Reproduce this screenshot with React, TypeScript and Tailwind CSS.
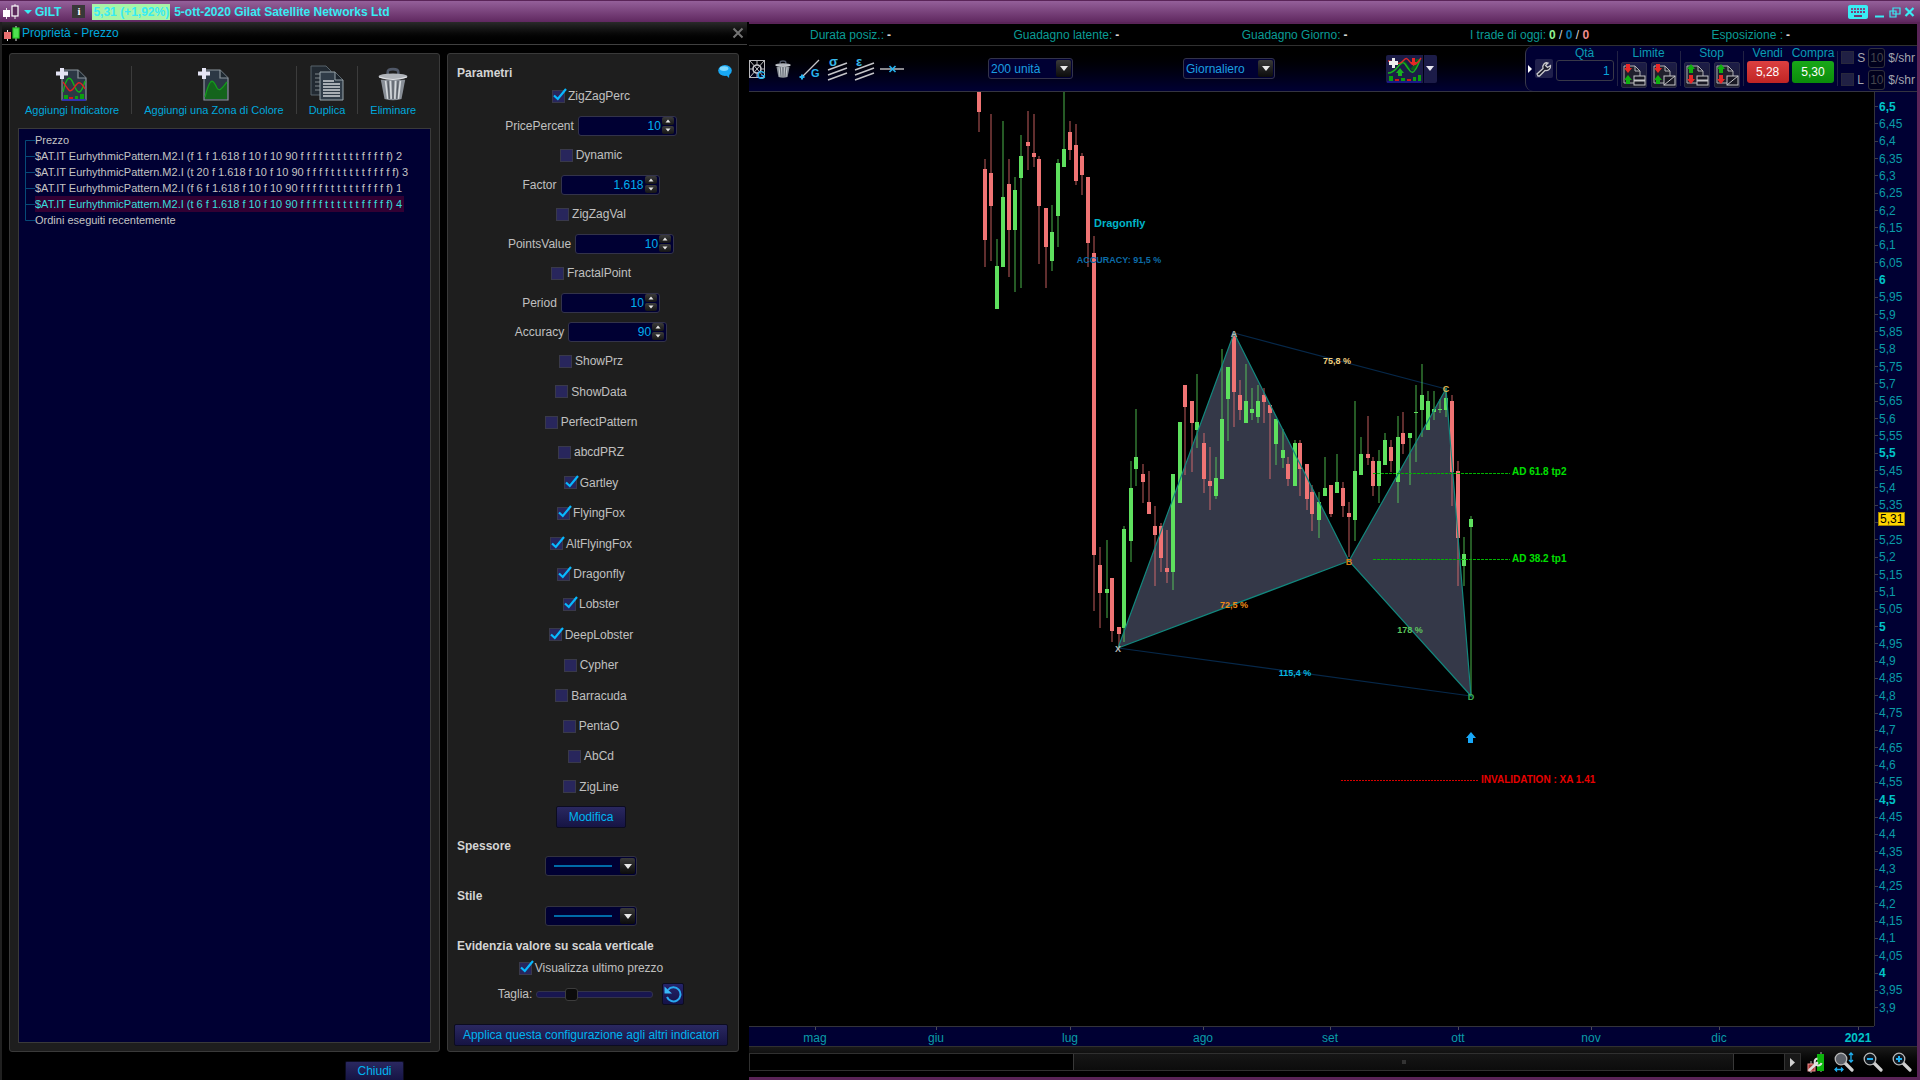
import type { ReactNode } from 'react';
import { MdKeyboard } from 'react-icons/md';

type Candle = [x: number, high: number, low: number, top: number, bottom: number, up: 0 | 1];

const candles: Candle[] = [
  [979, 92, 132, 90, 112, 0],
  [985, 159, 267, 169, 240, 0],
  [991, 114, 261, 173, 206, 0],
  [997, 239, 309, 266, 309, 1],
  [1003, 121, 267, 197, 267, 1],
  [1009, 159, 277, 184, 230, 0],
  [1015, 177, 292, 190, 230, 1],
  [1021, 135, 288, 156, 178, 1],
  [1028, 111, 170, 142, 146, 0],
  [1034, 114, 167, 153, 157, 0],
  [1039, 156, 264, 159, 206, 0],
  [1046, 208, 288, 208, 247, 0],
  [1052, 205, 271, 232, 261, 1],
  [1058, 159, 247, 163, 216, 1],
  [1064, 90, 167, 149, 167, 1],
  [1070, 121, 160, 132, 150, 0],
  [1076, 124, 185, 145, 181, 0],
  [1082, 153, 195, 156, 175, 0],
  [1088, 177, 267, 177, 243, 0],
  [1094, 236, 611, 253, 555, 0],
  [1100, 547, 628, 565, 593, 0],
  [1107, 540, 618, 589, 593, 1],
  [1112, 578, 642, 578, 631, 0],
  [1119, 627, 647, 627, 634, 0],
  [1124, 526, 642, 529, 628, 1],
  [1131, 461, 562, 488, 541, 1],
  [1136, 409, 486, 457, 469, 1],
  [1143, 464, 503, 474, 482, 0],
  [1149, 471, 514, 502, 514, 0],
  [1155, 506, 586, 526, 535, 0],
  [1161, 523, 572, 526, 558, 0],
  [1167, 530, 583, 568, 572, 0],
  [1173, 474, 590, 474, 572, 1],
  [1180, 422, 503, 422, 503, 1],
  [1185, 385, 475, 385, 407, 0],
  [1192, 401, 472, 401, 423, 0],
  [1197, 374, 448, 422, 430, 1],
  [1204, 433, 493, 443, 479, 0],
  [1210, 447, 510, 481, 486, 0],
  [1216, 457, 499, 478, 496, 1],
  [1222, 349, 479, 419, 479, 1],
  [1228, 367, 441, 367, 399, 1],
  [1234, 333, 427, 336, 392, 0],
  [1240, 380, 420, 395, 410, 0],
  [1246, 364, 423, 401, 423, 1],
  [1252, 388, 420, 409, 413, 1],
  [1258, 385, 423, 401, 417, 1],
  [1264, 388, 423, 395, 402, 0],
  [1270, 405, 479, 405, 413, 0],
  [1276, 419, 465, 419, 444, 1],
  [1283, 429, 468, 450, 458, 1],
  [1288, 457, 486, 464, 479, 0],
  [1295, 440, 486, 443, 486, 1],
  [1300, 440, 496, 443, 469, 0],
  [1307, 464, 510, 464, 499, 0],
  [1312, 485, 531, 492, 514, 0],
  [1319, 492, 538, 502, 520, 1],
  [1325, 457, 496, 488, 496, 1],
  [1331, 485, 517, 485, 514, 0],
  [1337, 454, 493, 482, 493, 1],
  [1343, 482, 517, 488, 506, 0],
  [1349, 502, 557, 513, 517, 0],
  [1355, 401, 541, 471, 520, 1],
  [1361, 437, 475, 454, 475, 1],
  [1368, 416, 465, 454, 458, 0],
  [1373, 457, 496, 461, 486, 0],
  [1379, 450, 503, 461, 486, 1],
  [1385, 433, 465, 440, 465, 1],
  [1391, 440, 472, 447, 461, 0],
  [1398, 416, 503, 437, 482, 1],
  [1403, 412, 454, 433, 444, 0],
  [1410, 433, 485, 433, 438, 1],
  [1416, 385, 462, 412, 413, 1],
  [1422, 364, 437, 395, 410, 1],
  [1428, 391, 430, 401, 430, 1],
  [1434, 391, 420, 409, 412, 1],
  [1440, 399, 413, 409, 410, 1],
  [1446, 388, 417, 398, 410, 1],
  [1452, 395, 506, 401, 472, 0],
  [1458, 461, 586, 471, 538, 0],
  [1464, 537, 586, 554, 566, 1],
  [1471, 516, 695, 519, 527, 1],
];

const months: [string, number][] = [
  ['mag', 815],
  ['giu', 936],
  ['lug', 1070],
  ['ago', 1203],
  ['set', 1330],
  ['ott', 1458],
  ['nov', 1591],
  ['dic', 1719],
  ['2021', 1858],
];

const prices = Array.from({ length: 53 }, (_, i) => 650 - i * 5);

const treeRows = [
  'Prezzo',
  '$AT.IT EurhythmicPattern.M2.I (f 1 f 1.618 f 10 f 10 90 f f f f t t t t t t f f f f f) 2',
  '$AT.IT EurhythmicPattern.M2.I (t 20 f 1.618 f 10 f 10 90 f f f f t t t t t t f f f f f) 3',
  '$AT.IT EurhythmicPattern.M2.I (f 6 f 1.618 f 10 f 10 90 f f f f t t t t t t f f f f f) 1',
  '$AT.IT EurhythmicPattern.M2.I (t 6 f 1.618 f 10 f 10 90 f f f f t t t t t t f f f f f) 4',
  'Ordini eseguiti recentemente',
];

const flags: [string, boolean][] = [
  ['ShowPrz', false],
  ['ShowData', false],
  ['PerfectPattern', false],
  ['abcdPRZ', false],
  ['Gartley', true],
  ['FlyingFox', true],
  ['AltFlyingFox', true],
  ['Dragonfly', true],
  ['Lobster', true],
  ['DeepLobster', true],
  ['Cypher', false],
  ['Barracuda', false],
  ['PentaO', false],
  ['AbCd', false],
  ['ZigLine', false],
];

/* ---------- form pieces ---------- */

const CheckField = ({ label, checked = false }: { label: string; checked?: boolean }) => (
  <label className="relative flex items-center gap-[3px]">
    <input
      type="checkbox"
      defaultChecked={checked}
      className="peer size-[13px] shrink-0 appearance-none border border-[#39394a] bg-[#28265c]"
    />
    <svg viewBox="0 0 14 14" className="pointer-events-none absolute left-px top-0 hidden size-[14px] peer-checked:block">
      <path d="M1 7.5 L4.8 11 L13 1" fill="none" stroke="#08b8ff" strokeWidth="2.2" />
    </svg>
    {label}
  </label>
);

const CheckRow = ({ label, checked }: { label: string; checked?: boolean }) => (
  <div className="flex h-[30px] items-center justify-center">
    <CheckField label={label} checked={checked} />
  </div>
);

const StepButton = ({ label, up }: { label: string; up?: boolean }) => (
  <button
    type="button"
    aria-label={label}
    className="flex h-2 w-3 items-center justify-center rounded-[2px] bg-gradient-to-b from-[#3c3c3c] to-[#161616]"
  >
    <svg viewBox="0 0 6 4" className="h-1 w-[6px]">
      <path d={up ? 'M3 0.5 L5.5 3.5 H0.5 Z' : 'M3 3.5 L5.5 0.5 H0.5 Z'} fill="#e6e6e6" />
    </svg>
  </button>
);

const NumberRow = ({ label, value }: { label: string; value: string }) => (
  <div className="flex h-[29px] items-center justify-center gap-1">
    <label htmlFor={label}>{label}</label>
    <span className="flex h-5 w-[99px] items-center rounded-[3px] border border-[#33334a] bg-[#000033] pr-[2px]">
      <input id={label} defaultValue={value} className="w-full min-w-0 bg-transparent pr-px text-right text-[#00aeef] outline-none" />
      <span className="flex flex-col gap-px">
        <StepButton up label={label + ' +'} />
        <StepButton label={label + ' -'} />
      </span>
    </span>
  </div>
);

const Arrow = () => (
  <span className="pointer-events-none absolute inset-y-[2px] right-[2px] flex w-[15px] items-center justify-center rounded-[2px] bg-gradient-to-b from-[#3a3a3a] to-[#0c0c0c]">
    <svg viewBox="0 0 8 5" className="h-[5px] w-2">
      <path d="M0 0 H8 L4 5 Z" fill="#e8e8e8" />
    </svg>
  </span>
);

const LinePicker = ({ label }: { label: string }) => (
  <div className="relative mx-auto h-5 w-[92px]">
    <select aria-label={label} className="size-full appearance-none rounded-[3px] border border-[#33333f] bg-[#000033]">
      <option value="1" aria-label="1"></option>
    </select>
    <svg viewBox="0 0 58 2" className="pointer-events-none absolute left-[9px] top-[9px] h-[2px] w-[58px]">
      <path d="M0 1 H58" stroke="#0090d0" strokeWidth="1.4" />
    </svg>
    <Arrow />
  </div>
);

const ToolSelect = ({ value, className }: { value: string; className: string }) => (
  <div className={'relative h-[21px] ' + className}>
    <select
      aria-label={value}
      className="size-full appearance-none rounded-[3px] border border-[#33334a] bg-[#000033] pl-[2px] text-[12px] text-[#1a9fe0]"
    >
      <option>{value}</option>
    </select>
    <Arrow />
  </div>
);

/* ---------- drawings ---------- */

const Page = ({ children }: { children: ReactNode }) => (
  <svg viewBox="0 0 32 34" className="h-[34px] w-8">
    <path d="M6 3 H22 L30 11 V33 H6 Z" fill="#2c3845" stroke="#8a949c" strokeWidth="1.2" />
    <path d="M22 3 V11 H30" fill="#1e2830" stroke="#8a949c" strokeWidth="1.2" />
    {children}
    <path d="M4 1 H8 V4.5 H12 V8.5 H8 V12 H4 V8.5 H0 V4.5 H4 Z" fill="#e4e4f4" />
  </svg>
);

const IndicatorIcon = () => (
  <Page>
    <path d="M7 25 C11 8 14 8 18 18 S25 28 29 14" fill="none" stroke="#10b418" strokeWidth="1.4" />
    <path d="M7 15 C11 20 13 27 17 22 S23 11 29 22" fill="none" stroke="#e02020" strokeWidth="1.4" />
    <path d="M8 28 h4 v4 h-4z M19 29 h3 v3 h-3z M24 27 h4 v5 h-4z" fill="#0ca010" />
    <path d="M13 30 h4 v2 h-4z" fill="#d01818" />
    <path d="M6 33 H30" stroke="#2020d0" strokeWidth="1.4" />
  </Page>
);

const ZoneIcon = () => (
  <Page>
    <path d="M7 30 C11 14 14 10 18 19 C21 27 25 20 29 15 V32 H7 Z" fill="#14641c" />
    <path d="M7 30 C11 14 14 10 18 19 C21 27 25 20 29 15" fill="none" stroke="#149c1c" strokeWidth="1.3" />
  </Page>
);

const DuplicateIcon = () => (
  <svg viewBox="0 0 34 36" className="h-9 w-[34px]">
    <path d="M1 1 H16 L21 6 V30 H1 Z" fill="#222a32" stroke="#56626a" />
    <path d="M5 9 H10 M5 13 H10 M5 17 H10 M5 21 H10 M5 25 H10" stroke="#80888c" />
    <path d="M10 7 H25 L33 15 V35 H10 Z" fill="#303c48" stroke="#98a4aa" />
    <path d="M25 7 V15 H33" fill="#1c242c" stroke="#98a4aa" />
    <path d="M13 16 H24 M13 19 H30 M13 22 H30 M13 25 H30 M13 28 H30 M13 31 H30" stroke="#d0d4d8" strokeWidth="1.3" />
  </svg>
);

const TrashIcon = ({ className }: { className: string }) => (
  <svg viewBox="0 0 28 32" className={className}>
    <path d="M9 8 V5 Q9 2 14 2 Q19 2 19 5 V8" fill="none" stroke="#505868" strokeWidth="2.4" />
    <ellipse cx="14" cy="9" rx="13.5" ry="3" fill="#b0b4ba" />
    <path d="M2.5 12 H25.5 L22 30 Q14 32.5 6 30 Z" fill="#888e96" />
    <path d="M7 13 L9 30 M11.5 13 L12.3 30 M16.5 13 L15.7 30 M21 13 L19 30" stroke="#d4d8dc" strokeWidth="1.5" />
    <path d="M9.3 13 L10.6 30 M14 13 V30 M18.8 13 L17.5 30" stroke="#555b63" strokeWidth="1.1" />
    <path d="M1 9.5 Q14 14 27 9.5" stroke="#e0e2e6" fill="none" />
  </svg>
);

const CandlePair = ({ left, right }: { left: string; right: string }) => (
  <svg viewBox="0 0 17 17" className="h-[17px] w-[17px] shrink-0">
    <path d="M4.5 5 V16 M13 1 V16" stroke="#e8e8e8" />
    <rect x="1" y="7" width="7" height="7" fill={left} />
    <rect x="10" y="3" width="6" height="10" fill={right} stroke={right === '#5c2a5c' ? '#fff' : '#28c828'} strokeWidth="1.2" />
  </svg>
);

// Parallel trend lines with the greek letter of the tool above them
const ChannelIcon = ({ letter }: { letter: string }) => (
  <svg viewBox="0 0 21 24" className="h-6 w-[21px]">
    <path d="M1 13 L20 6 M1 18 L20 11 M1 23 L20 16" stroke="#c4c4c8" strokeWidth="1.5" />
    <text x="2" y="9" fontSize="13" fontWeight="700" fill="#38b8e8">
      {letter}
    </text>
  </svg>
);

const OrderIcon = ({ first, second, slash }: { first: string; second: string; slash?: boolean }) => (
  <button type="button" aria-label="Ordine" className="size-[26px] rounded-[2px] border border-[#2c2c48] bg-gradient-to-b from-[#1c1c48] to-[#1c1c2c]">
    <svg viewBox="0 0 24 24" className="size-6">
      <path d="M2 3 H13 L18 8 V20 H2 Z" fill="#20202c" stroke="#b0b0b4" />
      <path d="M13 3 V8 H18" fill="none" stroke="#b0b0b4" />
      <path d={first === '#e82828' ? 'M4 1 H8 V5 H10 L6 10 L2 5 H4 Z' : 'M6 1 L10 6 H8 V10 H4 V6 H2 Z'} fill={first} />
      <path d={second === '#e82828' ? 'M4 12 H8 V16 H10 L6 21 L2 16 H4 Z' : 'M6 12 L10 17 H8 V21 H4 V17 H2 Z'} fill={second} />
      <rect x="12" y="13" width="11" height="9" fill="#181824" stroke="#c4c4c8" />
      {slash ? <path d="M12 22 L23 13" stroke="#c4c4c8" /> : <path d="M12 17.5 H23" stroke="#c4c4c8" strokeWidth="2" />}
    </svg>
  </button>
);

const Magnifier = ({ children, lens = '#101820' }: { children?: ReactNode; lens?: string }) => (
  <svg viewBox="0 0 20 20" className="size-5">
    <path d="M11 11 L18 18" stroke="#d0d0d0" strokeWidth="3.2" strokeLinecap="round" />
    <circle cx="7" cy="7" r="5.8" fill={lens} stroke="#b8b8b8" strokeWidth="1.3" />
    {children}
  </svg>
);

/* ---------- properties dialog ---------- */

const ToolButton = ({ label, icon }: { label: string; icon: ReactNode }) => (
  <button type="button" className="flex flex-col items-center justify-end gap-px text-[11px] leading-4 text-[#00a8dc]">
    {icon}
    {label}
  </button>
);

const Divider = () => <span className="my-1 w-px bg-[#3c3c3c]" />;

const IndicatorsPanel = () => (
  <section className="flex w-[431px] flex-col rounded-[3px] border border-[#3a3a3a] bg-[#1e1e1e] p-2">
    <div className="flex h-14 gap-3 pl-[7px]">
      <ToolButton label="Aggiungi Indicatore" icon={<IndicatorIcon />} />
      <Divider />
      <ToolButton label="Aggiungi una Zona di Colore" icon={<ZoneIcon />} />
      <Divider />
      <ToolButton label="Duplica" icon={<DuplicateIcon />} />
      <Divider />
      <ToolButton label="Eliminare" icon={<TrashIcon className="h-[34px] w-[30px]" />} />
    </div>
    <ul className="mt-[10px] flex-1 overflow-hidden border border-[#3a3a3a] bg-[#000033] pl-[6px] pt-[3px] text-[11px] text-[#c4c4c4]">
      {treeRows.map((row, i) => (
        <li key={row} className="flex h-4 whitespace-nowrap leading-4">
          <svg viewBox="0 0 10 16" className="h-4 w-[10px] shrink-0">
            <path
              d={i === 0 ? 'M0.5 16 V8.5 H10' : i === treeRows.length - 1 ? 'M0.5 0 V8.5 H10' : 'M0.5 0 V16 M0.5 8.5 H10'}
              fill="none"
              stroke="#064a78"
            />
          </svg>
          <span className={i === 4 ? 'bg-[#330033] pr-[2px] text-[#38dcdc]' : ''}>{row}</span>
        </li>
      ))}
    </ul>
  </section>
);

const ParametersPanel = () => (
  <section className="flex w-[292px] flex-col rounded-[3px] border border-[#3a3a3a] bg-[#1e1e1e] pb-[5px] pl-[6px] pr-[10px] pt-[7px] text-[#c0c0c0]">
    <div className="flex h-5 items-end justify-between pl-[3px]">
      <h2 className="font-bold text-[#d4d4d4]">Parametri</h2>
      <button type="button" aria-label="Commento" className="-mr-1 self-center">
        <svg viewBox="0 0 14 13" className="h-[13px] w-[14px]">
          <ellipse cx="7" cy="5.5" rx="6.8" ry="5.4" fill="#18a8f4" />
          <path d="M7 9 L11 13 L11.5 8 Z" fill="#18a8f4" />
          <ellipse cx="6" cy="3.6" rx="4.4" ry="2.4" fill="#7cd8ff" />
        </svg>
      </button>
    </div>
    <CheckRow label="ZigZagPerc" checked />
    <NumberRow label="PricePercent" value="10" />
    <CheckRow label="Dynamic" />
    <NumberRow label="Factor" value="1.618" />
    <CheckRow label="ZigZagVal" />
    <NumberRow label="PointsValue" value="10" />
    <CheckRow label="FractalPoint" />
    <NumberRow label="Period" value="10" />
    <NumberRow label="Accuracy" value="90" />
    <div className="flex flex-1 flex-col">
      {flags.map(([label, checked]) => (
        <div key={label} className="flex flex-1 items-center justify-center">
          <CheckField label={label} checked={checked} />
        </div>
      ))}
    </div>
    <button
      type="button"
      className="mx-auto mt-1 h-[22px] w-[70px] rounded-[2px] border border-[#0c0c20] bg-gradient-to-b from-[#2a2860] to-[#161444] text-[#00b4f0]"
    >
      Modifica
    </button>
    <h2 className="mt-2 h-5 pl-[3px] font-bold leading-5 text-[#d4d4d4]">Spessore</h2>
    <LinePicker label="Spessore" />
    <h2 className="mt-[10px] h-5 pl-[3px] font-bold leading-5 text-[#d4d4d4]">Stile</h2>
    <LinePicker label="Stile" />
    <h2 className="mt-[10px] h-5 pl-[3px] font-bold leading-5 text-[#d4d4d4]">Evidenzia valore su scala verticale</h2>
    <div className="flex h-6 items-center justify-center">
      <CheckField label="Visualizza ultimo prezzo" checked />
    </div>
    <div className="flex h-7 items-center justify-center">
      <label htmlFor="size">Taglia:</label>
      <input
        id="size"
        type="range"
        defaultValue={27}
        className="ml-1 h-[7px] w-[117px] appearance-none rounded-[3px] border border-[#33334a] bg-[#181650] [&::-webkit-slider-thumb]:size-[13px] [&::-webkit-slider-thumb]:appearance-none [&::-webkit-slider-thumb]:rounded-[3px] [&::-webkit-slider-thumb]:border [&::-webkit-slider-thumb]:border-[#3c3c3c] [&::-webkit-slider-thumb]:bg-[#0c0c0c]"
      />
      <button type="button" aria-label="Ripristina" className="ml-[9px] flex size-[22px] items-center justify-center rounded-[2px] border border-[#0c0c20] bg-gradient-to-b from-[#26246a] to-[#141248]">
        <svg viewBox="0 0 18 18" className="size-[18px]">
          <path d="M4 5 A7 7 0 1 1 3 12" fill="none" stroke="#28a8f0" strokeWidth="2" />
          <path d="M0.5 1.5 V8.5 H8 Z" fill="#38b8f8" />
        </svg>
      </button>
    </div>
    <button
      type="button"
      className="mt-4 h-[22px] rounded-[2px] border border-[#0c0c20] bg-gradient-to-b from-[#2a2860] to-[#161444] text-[#00b4f0]"
    >
      Applica questa configurazione agli altri indicatori
    </button>
  </section>
);

const PropertiesDialog = () => (
  <div className="flex w-[749px] shrink-0 flex-col border-l-2 border-[#202020] bg-black">
    <div className="mr-[2px] flex h-[23px] items-center border-b border-[#404040] bg-gradient-to-b from-[#2a2a2a] to-black pl-px">
      <CandlePair left="#e87070" right="#50e050" />
      <span className="ml-[2px] flex-1 text-[#00a8dc]">Proprietà - Prezzo</span>
      <button type="button" aria-label="Chiudi finestra" className="mr-[3px] size-3">
        <svg viewBox="0 0 12 12" className="size-3">
          <path d="M1.5 1.5 L10.5 10.5 M10.5 1.5 L1.5 10.5" stroke="#747474" strokeWidth="2" />
        </svg>
      </button>
    </div>
    <div className="flex flex-1 gap-[7px] pl-[7px] pt-2">
      <IndicatorsPanel />
      <ParametersPanel />
    </div>
    <div className="flex h-[28px] items-end justify-center overflow-hidden pr-[2px]">
      <button
        type="button"
        className="h-[19px] w-[59px] rounded-t-[2px] border-x border-t border-[#0c0c20] bg-gradient-to-b from-[#2a2860] to-[#161444] text-[#00b4f0]"
      >
        Chiudi
      </button>
    </div>
  </div>
);

/* ---------- chart window ---------- */

const Stat = ({ label, children }: { label: string; children: ReactNode }) => (
  <span className="flex gap-[3px] text-[#0a9c96]">
    {label}
    <b className="text-[#d8d8d8]">{children}</b>
  </span>
);

const OrderPanel = () => (
  <div className="flex gap-[3px] rounded-l-lg border-l border-[#3a3a4a] bg-[#000033] pl-[2px] text-[#0a9cb4]">
    <button type="button" aria-label="Nascondi" className="self-center">
      <svg viewBox="0 0 4 8" className="h-2 w-1">
        <path d="M0 0 L4 4 L0 8 Z" fill="#fff" />
      </svg>
    </button>
    <button type="button" aria-label="Impostazioni" className="mt-[13px] flex h-[19px] w-[18px] items-center justify-center rounded-[2px] bg-[#20204c]">
      <svg viewBox="0 0 16 16" className="size-4">
        <path
          d="M2 15 L1 13 L7 7.500 C6 4 9 1 12 2 L9.500 4.500 L11.500 6.500 L14.500 4.500 C15 8 12 10 9 9.500 L3.500 15 Z"
          fill="#181828"
          stroke="#c8c8cc"
          strokeWidth="1.3"
        />
      </svg>
    </button>
    <div className="flex w-[58px] flex-col items-center">
      <label htmlFor="qty" className="h-[14px] leading-[14px]">
        Qtà
      </label>
      <input id="qty" defaultValue="1" className="h-[21px] w-full rounded-[3px] border border-[#383848] bg-[#000033] pr-[3px] text-right text-[#08a4dc]" />
    </div>
    <span className="my-[5px] w-px bg-[#222244]" />
    <div className="flex flex-col items-center gap-[2px]">
      <span className="h-[14px] leading-[14px]">Limite</span>
      <div className="flex gap-1">
        <OrderIcon first="#e82828" second="#10b010" />
        <OrderIcon first="#e82828" second="#10b010" slash />
      </div>
    </div>
    <span className="my-[5px] w-px bg-[#222244]" />
    <div className="flex flex-col items-center gap-[2px]">
      <span className="h-[14px] leading-[14px]">Stop</span>
      <div className="flex gap-1">
        <OrderIcon first="#10b010" second="#e82828" />
        <OrderIcon first="#10b010" second="#e82828" slash />
      </div>
    </div>
    <span className="my-[5px] w-px bg-[#222244]" />
    <div className="flex flex-col items-center gap-px">
      <span className="h-[14px] leading-[14px]">Vendi</span>
      <button type="button" className="h-[22px] w-[42px] rounded-[3px] bg-gradient-to-b from-[#dc4040] to-[#c02424] text-white">
        5,28
      </button>
    </div>
    <div className="flex flex-col items-center gap-px">
      <span className="h-[14px] leading-[14px]">Compra</span>
      <button type="button" className="h-[22px] w-[42px] rounded-[3px] bg-gradient-to-b from-[#18a818] to-[#0a8c0a] text-white">
        5,30
      </button>
    </div>
    <span className="my-[5px] w-px bg-[#222244]" />
    <div className="flex flex-col justify-center gap-[2px] pr-[2px] text-[#a4a4ac]">
      {['S', 'L'].map((side) => (
        <div key={side} className="flex items-center gap-[3px]">
          <label className="flex w-[24px] items-center gap-[3px]">
            <input type="checkbox" className="size-[13px] shrink-0 appearance-none border border-[#28283c] bg-[#202044]" />
            {side}
          </label>
          <input
            aria-label={side + ' $/shr'}
            defaultValue="10"
            className="h-5 w-[17px] rounded-[3px] border border-[#30303c] bg-[#00001c] text-center text-[#44444c]"
          />
          $/shr
        </div>
      ))}
    </div>
  </div>
);

const Toolbar = () => (
  <div className="flex h-[46px] border-b border-[#343440] bg-gradient-to-b from-black to-[#000033]">
    <div className="flex flex-1 items-center">
      <button type="button" aria-label="Gann">
        <svg viewBox="0 0 17 22" className="h-[22px] w-[17px]">
          <rect x="0.5" y="2.5" width="15" height="17" fill="none" stroke="#b8b8bc" />
          <circle cx="8" cy="11" r="4" fill="none" stroke="#c8c8cc" strokeWidth="1.6" />
          <path d="M1 3 L15 19 M15 3 L1 19 M8 3 V7 M8 15 V19 M1 11 H4 M12 11 H15" stroke="#b8b8bc" />
          <text x="8" y="21" fontSize="11" fontWeight="700" fill="#28b4f0">
            G
          </text>
        </svg>
      </button>
      <button type="button" aria-label="Cestino" className="ml-[9px]">
        <TrashIcon className="h-5 w-4" />
      </button>
      <button type="button" aria-label="Retta" className="ml-2">
        <svg viewBox="0 0 22 22" className="size-[22px]">
          <path d="M2 20 L20 2" stroke="#c4c4c8" strokeWidth="1.3" />
          <path d="M0.5 19 H5.5 M3 16.5 V21.5" stroke="#28b4f0" strokeWidth="2" />
          <text x="12" y="19" fontSize="11" fontWeight="700" fill="#28b4f0">
            G
          </text>
        </svg>
      </button>
      <button type="button" aria-label="Sigma" className="ml-[6px]">
        <ChannelIcon letter="σ" />
      </button>
      <button type="button" aria-label="Epsilon" className="ml-[6px]">
        <ChannelIcon letter="ε" />
      </button>
      <button type="button" aria-label="Orizzontale" className="ml-[5px]">
        <svg viewBox="0 0 24 10" className="h-[10px] w-6">
          <path d="M0 5 H24" stroke="#c4c4c8" strokeWidth="1.4" />
          <path d="M9.5 2 L15.5 8 M15.5 2 L9.5 8" stroke="#28b4f0" strokeWidth="1.6" />
        </svg>
      </button>
      <div className="flex flex-1 items-center pl-[84px] pr-[88px]">
        <ToolSelect value="200 unità" className="w-[85px]" />
        <ToolSelect value="Giornaliero" className="ml-[110px] w-[92px]" />
        <div className="ml-auto flex h-7 gap-px">
          <button type="button" aria-label="Indicatori" className="w-[37px] rounded-l-[2px] bg-[#1c1c48]">
            <svg viewBox="0 0 36 28" className="h-7 w-9">
              <path d="M2 18 C12 18 12 4 18 6 S26 28 35 4 L30 4 C26 14 22 20 18 8 Z" fill="#0c5c1c" />
              <path d="M2 18 C12 18 14 3 19 9 S26 26 34 5" fill="none" stroke="#18b020" strokeWidth="1.4" />
              <path d="M2 6 C10 6 12 12 18 5 S24 20 35 3" fill="none" stroke="#e02828" strokeWidth="1.4" />
              <path d="M6 3 H9 V6 H12 V10 H9 V13 H6 V10 H3 V6 H6 Z" fill="#eee" />
              <path d="M14 13 L18 18 H16 V21 H12 V18 H10 Z" fill="#18b020" />
              <path d="M26 3 H29 V7 H31 L27.5 11 L24 7 H26 Z" fill="#e82828" />
              <path d="M3 21 h4 v5 h-4z M15 23 h4 v3 h-4z M27 22 h3 v4 h-3z M32 20 h3 v6 h-3z" fill="#0ca010" />
              <path d="M9 24 h4 v2 h-4z M21 24 h4 v2 h-4z" fill="#d01818" />
              <path d="M1 27 H35" stroke="#1818c8" />
            </svg>
          </button>
          <button type="button" aria-label="Elenco indicatori" className="flex w-[13px] items-center justify-center rounded-r-[2px] bg-[#1c1c48]">
            <svg viewBox="0 0 8 5" className="h-[5px] w-2">
              <path d="M0 0 H8 L4 5 Z" fill="#e8e8f0" />
            </svg>
          </button>
        </div>
      </div>
    </div>
    <OrderPanel />
  </div>
);

type TagProps = {
  x: number;
  y: number;
  fill: string;
  size?: number;
  anchor?: 'start' | 'middle';
  children: ReactNode;
};

const Tag = ({ x, y, fill, size = 9, anchor = 'middle', children }: TagProps) => (
  <text x={x} y={y} fill={fill} fontSize={size} textAnchor={anchor} fontWeight="700">
    {children}
  </text>
);

const Plot = () => (
  <svg className="min-h-0 w-full flex-1">
    <g transform="translate(-749 -92)">
      <path d="M1118 648 L1234 333 L1349 561 Z M1349 561 L1446 389 L1471 696 Z" fill="#343848" />
      <path d="M1234 333 L1446 389 M1118 648 L1471 696" stroke="#06284a" strokeWidth="1.2" />
      {candles.map(([x, high, low, top, bottom, up]) => (
        <g key={x} fill={up ? '#5ee05e' : '#f07474'}>
          <rect x={x - 0.5} y={high} width="1" height={low - high} opacity="0.8" />
          <rect x={x - 2} y={top} width="4" height={bottom - top} />
        </g>
      ))}
      <path
        d="M1118 648 L1234 333 L1349 561 Z M1349 561 L1446 389 L1471 696 Z"
        fill="none"
        stroke="#12887e"
        strokeWidth="1.2"
      />
      <path d="M1373 473.5 H1510 M1373 559.5 H1510" stroke="#00b400" strokeDasharray="3 1" />
      <path d="M1341 780.5 H1478" stroke="#d80000" strokeDasharray="2 1" />
      <Tag x={1094} y={227} fill="#00b4c8" size={11} anchor="start">Dragonfly</Tag>
      <Tag x={1119} y={263} fill="#0c6ca8">ACCURACY: 91,5 %</Tag>
      <Tag x={1337} y={364} fill="#f0d080">75,8 %</Tag>
      <Tag x={1234} y={608} fill="#f08c18">72,5 %</Tag>
      <Tag x={1410} y={633} fill="#5cc45c">178 %</Tag>
      <Tag x={1295} y={676} fill="#08b8e0">115,4 %</Tag>
      <Tag x={1118} y={652} fill="#b8b8b8">X</Tag>
      <Tag x={1234} y={337} fill="#b8b8b8">A</Tag>
      <Tag x={1349} y={565} fill="#d87c10">B</Tag>
      <Tag x={1446} y={392} fill="#e0b850">C</Tag>
      <Tag x={1471} y={700} fill="#3cac54">D</Tag>
      <Tag x={1512} y={475} fill="#00e000" size={10} anchor="start">AD 61.8 tp2</Tag>
      <Tag x={1512} y={562} fill="#00e000" size={10} anchor="start">AD 38.2 tp1</Tag>
      <Tag x={1481} y={783} fill="#e80000" size={10} anchor="start">INVALIDATION : XA 1.41</Tag>
      <path d="M1471 732 L1476 738 H1473 V743 H1468 V738 H1466 Z" fill="#18a8f8" />
    </g>
  </svg>
);

const PriceAxis = () => (
  <div className="flex min-h-0 w-[43px] flex-1 flex-col border-l border-[#33333a] bg-[#000033] pb-[10px] pt-[6px] text-[#0a9ca8]">
    {prices.map((p) => (
      <div key={p} className="relative flex min-h-0 flex-1 items-center">
        <span className="mr-px h-px w-[3px] bg-[#3c3c48]" />
        {p === 530 ? (
          <span className="absolute -top-[2px] left-[3px] z-10 border border-[#a08400] bg-[#ffd400] px-px leading-3 text-black">5,31</span>
        ) : (
          <span className={p % 50 === 0 ? 'font-bold leading-none text-[#00c4c8]' : 'leading-none'}>{String(p / 100).replace('.', ',')}</span>
        )}
      </div>
    ))}
  </div>
);

const TimeAxis = () => (
  <svg className="h-5 w-full border-t border-[#33333a] bg-[#000033]">
    <g transform="translate(-749 0)">
      {months.map(([name, x]) => (
        <g key={name}>
          <path d={`M${x + 0.5} 0 V3`} stroke="#4c4c58" />
          <text x={x} y="15" fontSize="12" textAnchor="middle" fontWeight={name === '2021' ? 700 : 400} fill={name === '2021' ? '#00c4c8' : '#0a9ca8'}>
            {name}
          </text>
        </g>
      ))}
    </g>
  </svg>
);

const ScrollBar = () => (
  <div className="flex h-[31px] items-center border-t border-[#303030] bg-gradient-to-b from-[#1a1a1a] to-black">
    <div className="flex h-[18px] flex-1 border border-[#303030] bg-black">
      <span className="flex-[324]" />
      <span className="flex flex-[660] items-center justify-center border-x border-[#383838] bg-gradient-to-b from-[#161616] to-[#0c0c0c]">
        <span className="size-1 bg-[#333]" />
      </span>
      <span className="flex-[50]" />
      <button type="button" aria-label="Avanti" className="flex w-4 items-center justify-center border-l border-[#333] bg-[#181818]">
        <svg viewBox="0 0 5 9" className="h-[9px] w-[5px]">
          <path d="M0 0 L5 4.5 L0 9 Z" fill="#d0d0d0" />
        </svg>
      </button>
    </div>
    <div className="flex items-center gap-[9px] pl-[6px] pr-[5px]">
      <button type="button" aria-label="Stile candele">
        <svg viewBox="0 0 18 21" className="h-[21px] w-[18px]">
          <path d="M4 9 V21 M14 0 V20" stroke="#b0b0b0" />
          <rect x="1" y="12" width="7" height="7" fill="#a83838" stroke="#f09090" />
          <rect x="10" y="2" width="7" height="17" fill="#0cb40c" />
          <path d="M2.500 18 L10 11" stroke="#e0e0e0" strokeWidth="2.6" strokeLinecap="round" />
          <path d="M10.500 6.500 A3.500 3.500 0 1 0 14.500 11" fill="none" stroke="#e0e0e0" strokeWidth="2" />
        </svg>
      </button>
      <button type="button" aria-label="Adatta">
        <Magnifier lens="#5c6068">
          <path d="M17 1 V10 M15 3 L17 1 L19 3 M15 8 L17 10 L19 8 M1 17.5 H9 M3 15.5 L1 17.5 L3 19.5 M7 15.5 L9 17.5 L7 19.5" fill="none" stroke="#20b0f0" strokeWidth="1.3" />
        </Magnifier>
      </button>
      <button type="button" aria-label="Riduci">
        <Magnifier>
          <path d="M4 7 H10" stroke="#20b0f0" strokeWidth="2" />
        </Magnifier>
      </button>
      <button type="button" aria-label="Ingrandisci">
        <Magnifier>
          <path d="M4 7 H10 M7 4 V10" stroke="#20b0f0" strokeWidth="2" />
        </Magnifier>
      </button>
    </div>
  </div>
);

const ChartWindow = () => (
  <div className="flex min-w-0 flex-1 flex-col border-b-[3px] border-r-[3px] border-t-2 border-[#5a2458] bg-black">
    <div className="flex h-[22px] items-center justify-between border-b border-[#303030] pl-[61px] pr-[127px]">
      <Stat label="Durata posiz.:">-</Stat>
      <Stat label="Guadagno latente:">-</Stat>
      <Stat label="Guadagno Giorno:">-</Stat>
      <Stat label="I trade di oggi:">
        <span className="text-[#90f090]">0</span> <span className="font-normal">/</span> <span className="text-[#0c74b0]">0</span>{' '}
        <span className="font-normal">/</span> <span className="text-[#f08c8c]">0</span>
      </Stat>
      <Stat label="Esposizione :">-</Stat>
    </div>
    <Toolbar />
    <div className="flex min-h-0 flex-1">
      <div className="flex min-w-0 flex-1 flex-col">
        <Plot />
        <TimeAxis />
      </div>
      <div className="flex flex-col">
        <PriceAxis />
        <div className="h-5 bg-[#000033]" />
      </div>
    </div>
    <ScrollBar />
  </div>
);

const TitleBar = () => (
  <header className="flex h-[22px] items-center border-t border-[#5a2458] bg-gradient-to-b from-[#94609a] to-[#602860] pl-[2px] pr-1 font-bold text-[#38ecf4]">
    <CandlePair left="#ffffff" right="#5c2a5c" />
    <svg viewBox="0 0 8 4" className="ml-[5px] h-1 w-2">
      <path d="M0 0 H8 L4 4 Z" fill="#38ecf4" />
    </svg>
    <span className="ml-[3px]">GILT</span>
    <button type="button" aria-label="Informazioni" className="ml-[11px] flex size-[13px] items-center justify-center bg-[#383838] text-[11px] leading-none text-white" style={{ fontFamily: '"Liberation Serif", serif' }}>
      i
    </button>
    <span className="ml-[7px] bg-[#a8f4a8] px-px leading-4">5,31 (+1,92%)</span>
    <span className="ml-1 flex-1">5-ott-2020 Gilat Satellite Networks Ltd</span>
    <button type="button" aria-label="Tastiera">
      <MdKeyboard className="size-6" />
    </button>
    <button type="button" aria-label="Controlli finestra" className="ml-1">
      <svg viewBox="0 0 42 14" className="h-[14px] w-[42px]">
        <path d="M1 11.5 H10" stroke="#38ecf4" strokeWidth="2" />
        <path d="M19 3 H26 V9 H19 Z M16 6 H22 V12 H16 Z" fill="#7c4480" stroke="#38ecf4" strokeWidth="1.2" />
        <path d="M31.5 3 L39.5 11 M39.5 3 L31.5 11" stroke="#38ecf4" strokeWidth="2.2" />
      </svg>
    </button>
  </header>
);

export default function App() {
  return (
    <div
      className="flex h-screen flex-col overflow-hidden bg-black text-[12px] leading-4"
      style={{ fontFamily: '"Liberation Sans", Arial, sans-serif' }}
    >
      <TitleBar />
      <main className="flex min-h-0 flex-1">
        <PropertiesDialog />
        <ChartWindow />
      </main>
    </div>
  );
}
